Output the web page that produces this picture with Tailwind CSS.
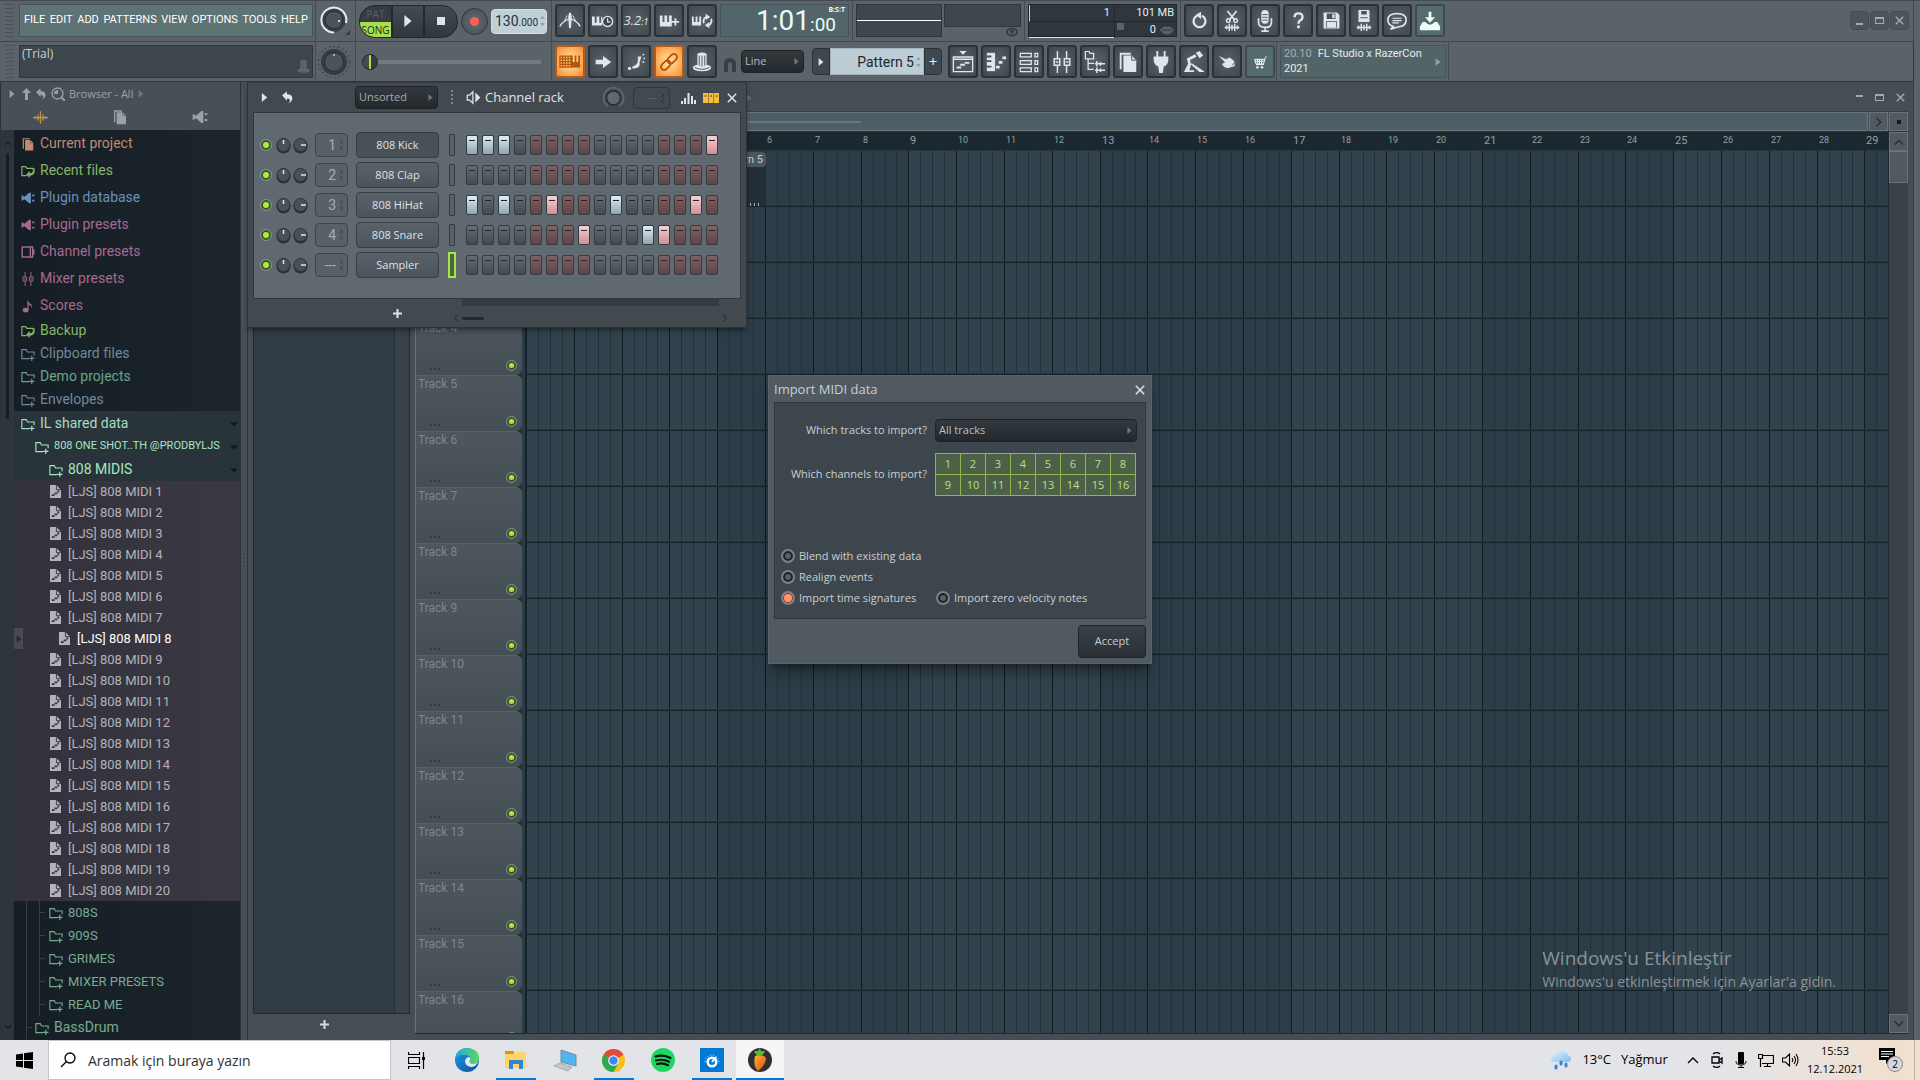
<!DOCTYPE html>
<html lang="tr">
<head>
<meta charset="utf-8">
<title>FL Studio</title>
<script src="https://cdn.jsdelivr.net/npm/@tailwindcss/browser@4"></script>
</head>
<body class="h-screen overflow-hidden bg-[#434b52] font-['Open_Sans','Noto_Sans',sans-serif] text-[11px] text-[#c5cdd1] flex flex-col">

<svg class="absolute size-0" aria-hidden="true">
  <defs>
    <linearGradient id="edgeA" x1="0" y1="0" x2="1" y2="1"><stop offset="0" stop-color="#1b9de2"/><stop offset="1" stop-color="#0c4fa0"/></linearGradient>
    <linearGradient id="edgeB" x1="0" y1="0" x2="1" y2="0"><stop offset="0" stop-color="#1fa8e0"/><stop offset="1" stop-color="#5fd860"/></linearGradient>
    <linearGradient id="fruit" x1="0" y1="0" x2="1" y2="1"><stop offset="0" stop-color="#ffb52e"/><stop offset="1" stop-color="#e04a10"/></linearGradient>
    <linearGradient id="cloud" x1="0" y1="0" x2="1" y2="1"><stop offset="0" stop-color="#e2f2fd"/><stop offset="1" stop-color="#7fbdec"/></linearGradient>
  </defs>
  <symbol id="metronome" viewBox="0 0 24 24"><path d="M1 18Q4 12 11 10M23 18Q20 12 13 10" fill="none" stroke="currentColor" stroke-width="1.600"/><path d="M11 3h2l1 4-1 13h-2L10 7z"/><path d="M9 6l-3 6M15 6l3 6" stroke="currentColor"/></symbol>
  <symbol id="keysclock" viewBox="0 0 24 24"><path d="M0 7h3v7h2V7h3v7h2V7h1v10H0z"/><circle cx="17" cy="12.500" r="5.500" fill="#3d454a" stroke="currentColor" stroke-width="1.500"/><path d="M17 9v4h3" fill="none" stroke="currentColor" stroke-width="1.300"/></symbol>
  <symbol id="keysplus" viewBox="0 0 24 24"><path d="M2 6h3v7h2V6h3v7h2V6h3v12H2zM18 9h2v3h3v2h-3v3h-2v-3h-3v-2h3z"/></symbol>
  <symbol id="keysloop" viewBox="0 0 24 24"><path d="M1 7h2v6h2V7h2v6h2V7h2v10H1z"/><path d="M14 14.500a4 5 0 0 1 3-7M22 9.500a4 5 0 0 1-3 7" fill="none" stroke="currentColor" stroke-width="2"/><path d="M16 4l5 3.500-5 3.500zM20 13l-5 3.500 5 3.500z"/></symbol>
  <symbol id="typing" viewBox="0 0 24 24"><path d="M1 5.500h12v12H1zM1 8.500h12M1 11.500h12M1 14.500h12M4 6v12M7 6v12M10 6v12" fill="none" stroke="currentColor" stroke-width="1.400"/><path d="M13 5h2v7h2V5h2v7h2V5h2v13H13z"/></symbol>
  <symbol id="arrow" viewBox="0 0 24 24"><path d="M4 9.500h8V5.500l9 6.500-9 6.500v-4H4z"/></symbol>
  <symbol id="slide" viewBox="0 0 24 24"><circle cx="5" cy="19" r="1.800"/><path d="M8 19q9 1 8-7l2-6h-4v5q0 4-6 6z"/><circle cx="20" cy="4" r="1"/><circle cx="21" cy="8" r="1"/><circle cx="20" cy="12" r="1"/></symbol>
  <symbol id="link" viewBox="0 0 24 24"><g fill="none" stroke="currentColor" stroke-width="2" transform="rotate(-45 12 12)"><rect x="1" y="8.500" width="12" height="7" rx="3.500"/><rect x="11" y="8.500" width="12" height="7" rx="3.500"/></g></symbol>
  <symbol id="knobtall" viewBox="0 0 24 24"><path d="M7 3q5-3 10 0v12q5 1 5 3 0 4-10 4T2 18q0-2 5-3z"/><path d="M9 5v11M12 5v12M15 5v11M4 18q8 4 16 0" fill="none" stroke="#4a5359" stroke-width="1"/></symbol>
  <symbol id="undoround" viewBox="0 0 24 24"><path d="M9 6a7.500 7.500 0 1 0 6 0" fill="none" stroke="currentColor" stroke-width="2.800"/><path d="M14 1v9L7 5z"/></symbol>
  <symbol id="cut" viewBox="0 0 24 24"><path d="M7 1l8 10M17 1L9 11" stroke="currentColor" stroke-width="1.800"/><circle cx="8" cy="11.500" r="2" fill="none" stroke="currentColor" stroke-width="1.500"/><circle cx="16" cy="11.500" r="2" fill="none" stroke="currentColor" stroke-width="1.500"/><path d="M4 19h16M6 17v4M9 15v8M12 16v6M15 15v8M18 17v4" stroke="currentColor" stroke-width="1.600"/></symbol>
  <symbol id="mic" viewBox="0 0 24 24"><rect x="8" y="0" width="8" height="15" rx="4"/><path d="M5 9v5q0 5 7 5t7-5V9M12 18v5M8 23h8" fill="none" stroke="currentColor" stroke-width="1.800"/><path d="M9 5h6M9 8h6M9 11h6" stroke="#4a5359"/></symbol>
  <symbol id="help" viewBox="0 0 24 24"><path d="M7 8q0-5 5-5t5 4.500q0 3-3 4.500-2 1-2 4" fill="none" stroke="currentColor" stroke-width="3"/><circle cx="12" cy="20" r="2"/></symbol>
  <symbol id="save" viewBox="0 0 24 24"><path d="M2 2h17l3 3v17H2z"/><path d="M6 3h11v7H6zM5 13h14v8H5z" fill="#4a5359"/><path d="M13 4h3v5h-3zM6 14h12v7H6z"/></symbol>
  <symbol id="savewave" viewBox="0 0 24 24"><path d="M6 0h11l1 1v12H6z"/><path d="M9 1h6v4H9zM8 8h8v1H8z" fill="#4a5359"/><path d="M4 19h16M6 17v4M9 15v8M12 16v6M15 15v8M18 17v4" stroke="currentColor" stroke-width="1.600"/></symbol>
  <symbol id="chat" viewBox="0 0 24 24"><path d="M8 18q-6-2-6-7 0-7 10-7t10 7-9 7.500L5 21z" fill="none" stroke="currentColor" stroke-width="1.800"/><path d="M7 9h10M7 11.500h10M7 14h7" stroke="currentColor" stroke-width="1.300"/></symbol>
  <symbol id="download" viewBox="0 0 24 24"><path d="M10.500 2h3v6h4L12 14 6.500 8h4z"/><path d="M4 13h3q5 6 10 0h3l3 5v4H1v-4z"/></symbol>
  <symbol id="playlist" viewBox="0 0 24 24"><path d="M8 0h8l-4 4z"/><path d="M1.500 6.500h21v16h-21zM2 9h20" fill="none" stroke="currentColor" stroke-width="1.500"/><path d="M5 17h5v2H5zM9 14h5v2H9zM14 12h5v2h-5z"/></symbol>
  <symbol id="pianoroll" viewBox="0 0 24 24"><path d="M2 2h9v20H2z"/><path d="M2 5h5v2H2zM2 10h5v2H2zM2 16h5v2H2z" fill="#4a5359"/><path d="M12 16h4v3h-4zM15 11h4v3h-4zM19 6h4v3h-4z"/></symbol>
  <symbol id="rack" viewBox="0 0 24 24"><path d="M2.500 2.500h12v4h-12zM2.500 10.500h12v4h-12zM2.500 18.500h12v4h-12zM18.500 2.500h3v4h-3zM18.500 10.500h3v4h-3zM18.500 18.500h3v4h-3z" fill="none" stroke="currentColor" stroke-width="1.400"/></symbol>
  <symbol id="mixer" viewBox="0 0 24 24"><path d="M7 0v8M7 16v8M17 0v8M17 16v8" stroke="currentColor" stroke-width="1.600"/><path d="M3.500 8.500h6v7h-6zM14.500 8.500h6v7h-6z" fill="none" stroke="currentColor" stroke-width="1.600"/><path d="M5 12h3M16 12h3" stroke="currentColor" stroke-width="1.600"/></symbol>
  <symbol id="browser" viewBox="0 0 24 24"><path d="M1.500 8.500v-8h4l1 2h4v6zM4.500 9v11h6M5 13.500h6" fill="none" stroke="currentColor" stroke-width="1.400"/><path d="M12 14h11M12 21h11M14 11v6M18 12v4M14 18v6M18 19v4" stroke="currentColor" stroke-width="1.600"/></symbol>
  <symbol id="docs" viewBox="0 0 24 24"><path d="M3 2h12v2H5v16H3z"/><path d="M7 5h9l5 5v13H7z"/><path d="M16 5v5h5" fill="none" stroke="#4a5359"/></symbol>
  <symbol id="plug" viewBox="0 0 24 24"><path d="M7 0h2v6h6V0h2v6h3v3q0 6-5 8l-1 7h-4l-1-7q-5-2-5-8V6h3z"/></symbol>
  <symbol id="plugside" viewBox="0 0 24 24"><path d="M1 7l5 3 8-7h3v18h-3l-8-7-5 3zM19 6h4v3h-4zM19 15h4v3h-4z"/></symbol>
  <symbol id="lamp" viewBox="0 0 24 24"><path d="M14 2l4-2 4 5-4 3z"/><path d="M14 5L6 9l1 5" fill="none" stroke="currentColor" stroke-width="3"/><path d="M1 23l5-10 3 1-2 7h5v2zM9 13l14 9v1h-5l-9-8z"/></symbol>
  <symbol id="hand" viewBox="0 0 24 24"><path d="M1 5l9 4 5-2 6 5v6l-6 2q-6 1-8-2l-2-3 4-2z"/><path d="M22 11l-4 6M20 19l-5 1" stroke="#4a5359"/></symbol>
  <symbol id="cart" viewBox="0 0 24 24"><path d="M22 4l-2 1-3 11H6M18 8H4l2 7h12M4 11h14M8 8l1 7M11 8v7M15 8l-1 7" fill="none" stroke="currentColor" stroke-width="1.500"/><circle cx="8" cy="20" r="1.800"/><circle cx="15" cy="20" r="1.800"/></symbol>
  <symbol id="undo" viewBox="0 0 24 24"><path d="M2 8l9-7v5q10 0 10 8 0 6-8 9 5-4 3-7-1-2-5-2v4z"/></symbol>
  <symbol id="tri" viewBox="0 0 10 10"><path d="M2 0l6 5-6 5z"/></symbol>
  <symbol id="tridown" viewBox="0 0 10 10"><path d="M0 3h10L5 8z"/></symbol>
  <symbol id="cross" viewBox="0 0 12 12"><path d="M1 1l10 10M11 1L1 11" stroke="currentColor" stroke-width="1.800"/></symbol>
  <symbol id="chev" viewBox="0 0 12 12"><path d="M3 1l5 5-5 5" fill="none" stroke="currentColor" stroke-width="1.600"/></symbol>
  <symbol id="folder" viewBox="0 0 24 24"><path d="M14 20H1.500V4.500H9l2 4h11.500V14" fill="none" stroke="currentColor" stroke-width="1.900"/><path d="M18.500 15v9M14 19.500h9" stroke="currentColor" stroke-width="2"/></symbol>
  <symbol id="folderback" viewBox="0 0 24 24"><path d="M10 20H1.500V4.500H8l2 3h10V10" fill="none" stroke="currentColor" stroke-width="2"/><path d="M23 7q3 12-8 13v4l-6-6 6-6v4q7 0 6-9z"/></symbol>
  <symbol id="channel" viewBox="0 0 24 24"><path d="M2 3.500h18v17H2zM16 3v18M19 9h3v6h-3" fill="none" stroke="currentColor" stroke-width="2.400"/></symbol>
  <symbol id="note" viewBox="0 0 24 24"><ellipse cx="8" cy="19" rx="5" ry="4"/><path d="M11 19V1q1 5 5 7t2 8q0-5-5-6v9z"/></symbol>
  <symbol id="midi" viewBox="0 0 12 14"><path d="M0 0h7l5 5v9H0z"/><path d="M7 0v5h5" fill="none" stroke="#36343f"/><path d="M2 10h3v2H2zM5 8h3v2H5zM8 6h2v2H8z" fill="#36343f"/></symbol>
  <symbol id="speaker" viewBox="0 0 24 24"><path d="M2 8h4l5-5v18l-5-5H2z" fill="none" stroke="currentColor" stroke-width="2"/><path d="M15 4l8 8-8 8z"/></symbol>
  <symbol id="wave" viewBox="0 0 24 24"><path d="M0 12h24M4 10v4M8 7v10M12 2v20M16 7v10M20 10v4" stroke="currentColor" stroke-width="2"/></symbol>
</svg>

<header class="bg-[#5b6369] border-t border-[#444c53] pr-[6px]">
  <div class="flex items-stretch h-[41px] border-b border-[#40484f] border-r">
    <div class="flex w-[316px] pl-[5px] pt-[3px] gap-[5px] border-r border-[#444c53]">
      <div class="w-[9px] h-[33px] bg-[repeating-linear-gradient(to_bottom,#4a5258_0_1px,transparent_1px_4px)]"></div>
      <nav id="menu" class="flex items-center justify-between w-[294px] h-[33px] px-1 bg-[#5e7373] border border-[#465459] text-white text-[11px] font-['Roboto','Open_Sans',sans-serif]"></nav>
    </div>
    <div class="w-10 pt-[3px] pr-[3px] border-r border-[#444c53] flex justify-center">
      <svg class="size-8" viewBox="0 0 32 32"><circle cx="16" cy="16" r="12" fill="#3b444a"/><circle cx="16" cy="16" r="9" fill="#4a5359" stroke="#20272c"/><path d="M16 28.500A12.500 12.500 0 1 1 28 19" fill="none" stroke="#e4ebee" stroke-width="2"/><circle cx="21" cy="17" r="1" fill="#fff"/><path d="M27 31h5v-5z" fill="#353d43"/></svg>
    </div>
    <div class="flex items-center w-[196px] pl-[3px] border-r border-[#444c53]">
      <button class="w-[33px] h-[33px] rounded-l-2xl overflow-hidden bg-[#353d43] border border-[#22292e] flex flex-col text-center text-[10px] leading-4"><span class="h-4 w-full text-[#565f65]">PAT</span><span class="h-4 w-full bg-[#a5e04c] text-[#1e2a10]">SONG</span></button>
      <button aria-label="Play" class="w-[32px] h-[33px] bg-linear-to-b from-[#434b51] to-[#30373c] border border-[#22292e] flex items-center justify-center text-[#e2e7ea]"><svg class="size-3 fill-current"><use href="#tri"/></svg></button>
      <button aria-label="Stop" class="w-[34px] h-[33px] rounded-r-2xl bg-linear-to-b from-[#434b51] to-[#30373c] border border-[#22292e] flex items-center justify-center"><span class="size-2 bg-[#dfe4e7]"></span></button>
      <button aria-label="Record" class="ml-[3px] size-[27px] rounded-full bg-radial from-[#626b70] to-[#454e54] border border-[#2e363b] flex items-center justify-center"><span class="size-[9px] rounded-full bg-[#ff5c58]"></span></button>
      <div class="ml-[3px] w-[56px] h-[25px] rounded bg-[#bfd0d8] border border-[#d5e0e5] text-[#263037] flex items-center pl-[3px] font-['Roboto',sans-serif] leading-none"><span class="text-[14px]">130</span><span class="text-[10px] pt-[3px]">.000</span><svg class="ml-auto mr-px w-[5px] h-3" viewBox="0 0 5 12"><path d="M0 4l2.500-3L5 4zM0 8l2.500 3L5 8z" fill="#93a3ab"/></svg></div>
    </div>
    <div class="flex w-[301px] pt-[3px] pl-[3px] gap-[3px] border-r border-[#444c53]">
      <div class="contents" data-tools="metronome keysclock 321 keysplus keysloop"></div>
      <div class="flex-1 mr-[3px] h-[33px] bg-[#52656a] border border-[#445459] text-[#e8fbfb] font-['Roboto',sans-serif] flex items-end justify-end leading-none relative"><span class="text-[28px] pb-px">1:01</span><span class="text-[19px] pr-[12px] pb-[2px]">:00</span><span class="absolute right-[3px] top-[1px] text-[7px] font-bold font-['Open_Sans',sans-serif]">B:S:T</span></div>
    </div>
    <div class="flex w-[172px] pt-[3px] pl-[3px] gap-[2px] border-r border-[#444c53]">
      <div class="w-[86px] h-[33px] bg-[#3e474e] border border-[#30383e] flex items-center"><div class="h-px w-full bg-white"></div></div>
      <div class="w-[77px]"><div class="h-[23px] bg-[#3e474e] border border-[#30383e]"></div><svg class="ml-auto mr-[3px] w-3 h-[10px]" viewBox="0 0 12 10"><ellipse cx="6" cy="5" rx="5" ry="3.500" fill="none" stroke="#363e44" stroke-width="2"/><circle cx="6" cy="4.500" r="2" fill="#363e44"/></svg></div>
    </div>
    <div class="w-[156px] pt-[3px] pl-[3px] border-r border-[#444c53]">
      <div class="grid grid-cols-[85px_1fr] w-[149px] h-[33px] bg-[#2f373d] border border-[#20272c] text-right text-[#e6ecef] text-[11px] leading-4 font-['Roboto',sans-serif]">
        <span class="border-l border-l-[#c5cdd1] pr-1 border-b border-b-[#20272c]">1</span><span class="pr-[2px] border-l border-b border-[#20272c]">101 MB</span>
        <span class="border-b border-[#dfe6ea] h-4"></span><span class="flex items-center justify-end gap-1 pr-[2px] border-l border-[#20272c]"><span class="mr-auto w-[7px] h-[7px] -mt-2 ml-[2px] bg-[#5b6369]"></span>0 <svg class="w-[14px] h-[9px]" viewBox="0 0 14 9"><path d="M0 4q4-5 7-3 3-2 7 3-7 9-14 0z" fill="#5b6369"/><path d="M2 4h10" stroke="#2f373d"/></svg></span>
      </div>
    </div>
    <div class="flex flex-1 pl-[3px] pt-[3px] gap-[3px]" data-tools="undoround cut mic help save savewave chat download*"></div>
    <div class="flex gap-px pr-[4px] pt-[10px] text-[#a3abb0]">
      <button aria-label="Minimize" class="size-[19px] rounded-sm bg-[#4c555b] border border-[#454d53] flex items-end justify-center pb-[4px]"><span class="w-[7px] h-[2px] bg-current"></span></button>
      <button aria-label="Restore" class="size-[19px] rounded-sm bg-[#4c555b] border border-[#454d53] flex items-center justify-center"><span class="w-[9px] h-[7px] border border-t-2"></span></button>
      <button aria-label="Close" class="size-[19px] rounded-sm bg-[#4c555b] border border-[#454d53] flex items-center justify-center"><svg class="size-[9px]"><use href="#cross"/></svg></button>
    </div>
  </div>
  <div class="flex h-10 border-b border-r border-[#30383e]">
    <div class="flex w-[316px] pl-[5px] pt-[3px] gap-[5px] border-r border-[#444c53]">
      <div class="w-[9px] h-[33px] bg-[repeating-linear-gradient(to_bottom,#4a5258_0_1px,transparent_1px_4px)]"></div>
      <div class="flex justify-between w-[294px] h-[33px] pl-[2px] pr-px bg-[#3e464d] border border-[#30383e] text-[12px] leading-4 text-[#c9d0d4]">(Trial)<svg class="size-[15px] mt-[13px] text-[#636c72] fill-current"><use href="#knobtall"/></svg></div>
    </div>
    <div class="w-10 pt-[3px] pr-[3px] border-r border-[#444c53] flex justify-center">
      <svg class="size-[34px] shrink-0" viewBox="0 0 34 34"><circle cx="17" cy="17" r="15.500" fill="none" stroke="#3c454b" stroke-width="1.500" stroke-dasharray="1.500 3"/><circle cx="17" cy="17" r="13" fill="#343d43"/><circle cx="17" cy="17" r="9.500" fill="#4a5359" stroke="#252c31"/><circle cx="17" cy="10" r="1" fill="#c5cdd1"/></svg>
    </div>
    <div class="w-[196px] pl-[6px] pr-[10px] flex items-center border-r border-[#444c53]">
      <input type="range" aria-label="Master volume" value="0" class="w-full h-[17px] appearance-none bg-transparent bg-[linear-gradient(#717a80,#717a80)] bg-[length:100%_4px] bg-center bg-no-repeat [&::-webkit-slider-thumb]:appearance-none [&::-webkit-slider-thumb]:size-[16px] [&::-webkit-slider-thumb]:rounded-full [&::-webkit-slider-thumb]:border [&::-webkit-slider-thumb]:border-[#20272c] [&::-webkit-slider-thumb]:bg-[linear-gradient(90deg,#434c52_6px,#a5e83c_6px,#a5e83c_8px,#343c42_8px)]">
    </div>
    <div class="flex w-[725px] pt-[3px] pl-[3px] gap-[3px] border-r border-[#444c53]">
      <div class="contents" data-tools="typing! arrow slide link! knobtall"></div>
      <svg class="w-[14px] h-[15px] mt-3 ml-[3px] mr-[1px]" viewBox="0 0 14 15"><path d="M3 15V8q0-5 4-5t4 5v7" fill="none" stroke="#363e44" stroke-width="4"/></svg>
      <div class="relative h-[23px] mt-[5px] w-[63px]"><select aria-label="Snap" class="appearance-none size-full bg-linear-to-b from-[#33393d] to-[#22282c] border border-[#1c2226] rounded-sm pl-[3px] text-[#b5bcc0]"><option>Line</option></select><svg class="absolute right-1 top-2 size-[7px] fill-[#6c757a]"><use href="#tri"/></svg></div>
      <div class="flex mt-[3px] ml-[5px] mr-[3px] h-[27px]">
        <button aria-label="Pattern menu" class="w-[18px] bg-[#3f484e] border border-[#2b3237] rounded-l flex items-center justify-center"><svg class="size-2 fill-[#dfe5e8]"><use href="#tri"/></svg></button>
        <div class="w-[94px] bg-[#bccdd5] border border-[#a5b5bd] text-[#20292f] text-[14px] leading-6 font-['Roboto',sans-serif] flex items-center justify-end gap-[2px] pr-[2px]">Pattern 5<svg class="w-[5px] h-3" viewBox="0 0 5 12"><path d="M0 4l2.500-3L5 4zM0 8l2.500 3L5 8z" fill="#93a3ab"/></svg></div>
        <button aria-label="Add pattern" class="w-[18px] bg-[#3f484e] border border-[#2b3237] rounded-r text-[#e5eaec] text-[15px] leading-none">+</button>
      </div>
      <div class="contents" data-tools="playlist pianoroll rack mixer browser docs plug lamp hand cart*"></div>
    </div>
    <a href="#" class="block w-[166px] ml-[3px] mt-[3px] h-[33px] bg-[#536468] border border-[#445459] leading-[15px] pl-[3px] relative text-[#e3edee] font-['Roboto',sans-serif]"><span class="text-[#9fb2b5] mr-[6px]">20.10</span>FL Studio x RazerCon<br>2021<svg class="absolute right-[3px] top-3 size-2 fill-[#8fa0a3]"><use href="#tri"/></svg></a>
    <div class="ml-[2px] border-l border-[#444c53]"></div>
  </div>
</header>

<main class="flex flex-1 min-h-0 relative pr-[6px] bg-[#59626a]">
  <aside class="w-[241px] shrink-0 border-l border-r border-[#2c343a] bg-[#475057] flex flex-col">
    <div class="h-[48px] text-[#9aa2a7]">
      <div class="flex items-center h-6 pl-[7px] gap-1">
        <svg class="size-2 fill-current mr-[2px]"><use href="#tri"/></svg>
        <svg class="w-[9px] h-3" viewBox="0 0 9 12"><path d="M4.500 0L9 5H6v7H3V5H0z" class="fill-current"/></svg>
        <svg class="size-3 fill-current"><use href="#undo"/></svg>
        <svg class="size-[14px]" viewBox="0 0 14 14"><circle cx="6.500" cy="6.500" r="5.500" fill="none" stroke="currentColor" stroke-width="1.300"/><path d="M10 10l4 4" stroke="currentColor" stroke-width="2"/><path d="M3 7a4 4 0 0 1 4-4v4z" class="fill-current"/></svg>
        <span class="text-[11px]">Browser - All</span>
        <svg class="size-2 fill-[#6e777c]"><use href="#tri"/></svg>
      </div>
      <div class="flex justify-around items-center h-[22px]">
        <svg class="size-[15px] text-[#c79640]"><use href="#wave"/></svg>
        <svg class="size-4 fill-current"><use href="#docs"/></svg>
        <svg class="size-4 fill-current"><use href="#plugside"/></svg>
      </div>
    </div>
    <div class="flex flex-1 min-h-0">
      <div class="w-[13px] bg-[#2d363c] text-[#151c21] flex flex-col items-center py-[9px]">
        <svg class="size-2 -rotate-90"><use href="#chev"/></svg>
        <div class="w-[3px] h-[266px] mt-[6px] rounded bg-[#171e23]"></div>
        <svg class="size-2 rotate-90 mt-auto"><use href="#chev"/></svg>
      </div>
      <div id="tree" class="flex-1 min-w-0 overflow-hidden bg-linear-to-r from-[#151e24] to-[#1c252c] font-['Roboto','Open_Sans',sans-serif] text-[14px] whitespace-nowrap"></div>
    </div>
  </aside>
  <div class="w-[7px] shrink-0 bg-[#475057] border-r border-[#2c343a] flex items-center justify-center"><div class="w-px h-4 bg-[repeating-linear-gradient(to_bottom,#20272c_0_1px,transparent_1px_4px)]"></div></div>

  <section class="flex-1 min-w-0 flex flex-col bg-[#454e54] pr-[5px] border-r border-[#363e44]" aria-label="Playlist">
    <div class="h-[29px] flex items-center justify-end gap-3 pr-[3px] pt-[2px] text-[#a3abb0]">
      <svg class="size-2 fill-[#626b70] ml-[497px] mr-auto"><use href="#tri"/></svg>
      <span class="w-[7px] h-[2px] bg-current mb-1"></span><span class="w-[9px] h-[7px] border border-t-2"></span><svg class="size-[9px]"><use href="#cross"/></svg>
    </div>
    <div class="flex flex-1 min-h-0">
      <div class="w-[157px] ml-[5px] mr-[5px] flex flex-col shrink-0">
        <div class="flex flex-1 border border-[#20292f] bg-[#323c44]"><div class="flex-1 border-r border-[#272f36]"></div><div class="w-[14px] bg-[#3a4249]"></div></div>
        <button aria-label="Add" class="h-5 mb-[6px] pr-[14px] text-[#d5dbde] flex items-center justify-center"><svg class="size-[9px]" viewBox="0 0 9 9"><path d="M4.500 0v9M0 4.500h9" stroke="currentColor" stroke-width="2"/></svg></button>
      </div>
      <div class="flex-1 min-w-0 flex flex-col mb-[6px]">
        <div class="flex h-5 border-t border-[#363e44]">
          <div class="flex-1 h-[19px] bg-[#4f5e64] border border-[#67747a] flex items-center"><div class="w-[445px] h-[2px] bg-[#65757b]"></div></div>
          <div class="size-[19px] ml-px bg-[#515a61] border border-[#6a7379] text-[#252c31] flex items-center justify-center"><svg class="size-[10px]"><use href="#chev"/></svg></div>
          <div class="size-[19px] ml-px bg-[#515a61] border border-[#6a7379] flex items-center justify-center"><span class="size-1 bg-[#151b1f]"></span></div>
        </div>
        <div class="flex h-5 bg-[#1c282f] border-y border-[#2b363c]">
          <div class="w-[112px] shrink-0"></div>
          <div id="ruler" class="flex flex-1 min-w-0 overflow-hidden items-center text-[#93a0a5] font-['Roboto',sans-serif]"></div>
          <div class="size-[19px] bg-[#515a61] border border-[#6a7379] text-[#252c31] flex items-center justify-center shrink-0"><svg class="size-[10px] -rotate-90"><use href="#chev"/></svg></div>
        </div>
        <div class="flex flex-1 min-h-0 border-b border-[#20292f]">
          <div id="tracks" class="w-[107px] shrink-0 overflow-hidden bg-[#1f2c34] border-l border-[#697277]"></div>
          <div class="w-[5px] shrink-0 bg-[#2c3b45] border-r-2 border-[#14222a]"></div>
          <div id="canvas" class="flex-1 min-w-0 relative overflow-hidden">
            <svg id="grid" class="absolute inset-0 size-full" shape-rendering="crispEdges"></svg>
            <div class="absolute left-[130px] top-px w-[109px] h-[54px] bg-[#1f2c34]/80 flex flex-col justify-between"><span class="bg-[#4c565c] rounded-r-sm h-[15px] text-right pr-[3px] leading-[15px] text-[11px] font-['Roboto',sans-serif]">Pattern 5</span><span class="self-end mr-1 w-3 h-[3px] bg-[repeating-linear-gradient(to_right,#aab3b8_0_1px,transparent_1px_4px)]"></span></div>
            <div class="absolute right-[52px] bottom-[42px] text-[#8b9295]"><p class="text-[19px] leading-7">Windows'u Etkinleştir</p><p class="text-[14px] leading-[19px]">Windows'u etkinleştirmek için Ayarlar'a gidin.</p></div>
          </div>
          <div class="w-5 shrink-0 bg-[#3a4249] border-l border-[#20292f] flex flex-col justify-between text-[#252c31]">
            <div class="h-8 bg-[#515a61] border border-[#6a7379]"></div>
            <div class="h-[19px] bg-[#515a61] border border-[#6a7379] flex items-center justify-center"><svg class="size-[10px] rotate-90"><use href="#chev"/></svg></div>
          </div>
        </div>
      </div>
    </div>
  </section>

  <section aria-label="Channel rack" class="absolute left-[247px] top-0 w-[500px] h-[246px] bg-[#42494f] border border-[#2c343a] border-t-[#353d43] flex flex-col shadow-md shadow-black/30">
    <div class="flex items-center h-[29px] pl-3 pr-[9px] text-[#e0e5e8]">
      <svg class="size-[9px] fill-current"><use href="#tri"/></svg>
      <svg class="size-[13px] fill-current ml-[12px]"><use href="#undo"/></svg>
      <div class="relative ml-[61px] w-[83px] h-[23px]"><select aria-label="Filter" class="appearance-none size-full bg-linear-to-b from-[#33393d] to-[#22282c] border border-[#1c2226] rounded-sm pl-[3px] text-[#a5adb1] text-[11px]"><option>Unsorted</option></select><svg class="absolute right-1 top-2 size-[7px] fill-[#6c757a]"><use href="#tri"/></svg></div>
      <div class="ml-[13px] w-[2px] h-[15px] bg-[repeating-linear-gradient(to_bottom,#7b8489_0_2px,transparent_2px_4px)]"></div>
      <svg class="size-[15px] fill-current ml-[13px]"><use href="#speaker"/></svg>
      <h2 class="text-[13px] ml-1 w-[117px]">Channel rack</h2>
      <svg class="size-[23px]" viewBox="0 0 23 23"><path d="M6 20a10 10 0 1 1 11 0" fill="none" stroke="#5b646a" stroke-width="2"/><circle cx="11.500" cy="12" r="7" fill="#5f686e" stroke="#262d32" stroke-width="1.500"/></svg>
      <div class="w-[37px] h-[22px] ml-2 rounded border border-[#2f373d] flex items-center justify-end gap-1 pr-1 text-[#2b3237]"><span class="text-[9px] text-[#697277]">---</span><svg class="w-[5px] h-3" viewBox="0 0 5 12"><path d="M1 1l3 2-3 2M4 7L1 9l3 2" fill="none" stroke="currentColor"/></svg></div>
      <svg class="w-[15px] h-3 ml-[11px]" viewBox="0 0 15 12"><path d="M1 9v3M4 6v6M7.500 1v11M11 4v8M14 8v4" stroke="currentColor" stroke-width="2"/></svg>
      <svg class="w-4 h-[10px] ml-[7px]" viewBox="0 0 16 10"><path d="M0 0h5v10H0zM5.500 0h5v10h-5zM11 0h5v10h-5z" fill="#f6bd3c"/><path d="M1.500 3h2M7 3h2M12.500 3h2" stroke="#423a20"/></svg>
      <svg class="size-[10px] ml-auto"><use href="#cross"/></svg>
    </div>
    <div id="channels" class="mx-[5px] h-[187px] bg-[#616970] border border-[#30383e] pt-[17px]"></div>
    <div class="flex flex-1 text-[#2b3237]">
      <button aria-label="Add channel" class="ml-[145px] mt-[9px] size-[11px] text-[#dfe4e7]"><svg class="size-[9px]" viewBox="0 0 9 9"><path d="M4.500 0v9M0 4.500h9" stroke="currentColor" stroke-width="2"/></svg></button>
      <div class="ml-[48px] flex-1 pr-[17px]"><div class="h-[7px] ml-[10px] mr-[10px] bg-[#343b41]"></div><div class="flex items-center pt-2"><svg class="size-2 rotate-180"><use href="#chev"/></svg><span class="ml-[2px] h-[3px] w-[22px] rounded bg-[#242b30]"></span><svg class="size-2 ml-auto"><use href="#chev"/></svg></div></div>
    </div>
  </section>

  <section role="dialog" aria-labelledby="dlg-title" class="absolute left-[768px] top-[293px] w-[384px] h-[289px] bg-[#515a61] border border-[#5a636a] px-[5px] text-[#c8cfd2] shadow-lg shadow-black/40">
    <div class="flex items-center justify-between h-[26px] pt-px pr-px"><h2 id="dlg-title" class="text-[13px]">Import MIDI data</h2><button aria-label="Close" class="text-[#dfe4e7]"><svg class="size-[10px]"><use href="#cross"/></svg></button></div>
    <div class="h-[217px] bg-[#3e464d] border border-[#30383e] pt-4 px-2">
      <div class="grid grid-cols-[144px_202px] gap-x-2 gap-y-[11px] items-center text-right">
        <label for="trk">Which tracks to import?</label>
        <div class="relative h-[23px]"><select id="trk" class="appearance-none size-full bg-linear-to-b from-[#33393d] to-[#22282c] border border-[#1c2226] rounded-sm pl-[3px] text-[#b9c0c4]"><option>All tracks</option></select><svg class="absolute right-1 top-2 size-[7px] fill-[#6c757a]"><use href="#tri"/></svg></div>
        <span>Which channels to import?</span>
        <div id="midich" class="grid grid-cols-8 gap-px p-px w-[201px] h-[43px] bg-[#8db84e] text-[#b4e283] text-center"></div>
      </div>
      <div class="grid grid-cols-[155px_1fr] gap-y-[5px] pt-[52px] leading-4 -ml-[2px]">
        <label class="flex items-center gap-1 col-span-2"><input type="checkbox" class="appearance-none size-[14px] rounded-full border-2 border-[#788187] bg-[#566066] shadow-[inset_0_0_0_2px_#1b2125] checked:bg-[#ff9a70] checked:shadow-[inset_0_0_0_1px_#a3200c]">Blend with existing data</label>
        <label class="flex items-center gap-1 col-span-2"><input type="checkbox" class="appearance-none size-[14px] rounded-full border-2 border-[#788187] bg-[#566066] shadow-[inset_0_0_0_2px_#1b2125] checked:bg-[#ff9a70] checked:shadow-[inset_0_0_0_1px_#a3200c]">Realign events</label>
        <label class="flex items-center gap-1"><input type="checkbox" checked class="appearance-none size-[14px] rounded-full border-2 border-[#788187] bg-[#566066] shadow-[inset_0_0_0_2px_#1b2125] checked:bg-[#ff9a70] checked:shadow-[inset_0_0_0_1px_#a3200c]">Import time signatures</label>
        <label class="flex items-center gap-1"><input type="checkbox" class="appearance-none size-[14px] rounded-full border-2 border-[#788187] bg-[#566066] shadow-[inset_0_0_0_2px_#1b2125] checked:bg-[#ff9a70] checked:shadow-[inset_0_0_0_1px_#a3200c]">Import zero velocity notes</label>
      </div>
    </div>
    <button class="block ml-auto mt-[6px] w-[68px] h-[33px] rounded-sm bg-linear-to-b from-[#3a4146] to-[#2a3034] border border-[#1e2428]">Accept</button>
  </section>
</main>

<footer class="h-10 shrink-0 bg-linear-to-r from-[#e3e4e7] from-90% to-[#f3dfcb] flex items-stretch text-black">
  <button aria-label="Start" class="w-12 flex items-center justify-center"><svg class="size-[17px]" viewBox="0 0 17 17"><path d="M0 2.500l7-1V8H0zM8 1.300L17 0v8H8zM0 9h7v6.500l-7-1zM8 9h9v8l-9-1.300z"/></svg></button>
  <label class="w-[343px] bg-white border border-[#c6c6c8] flex items-center pl-[11px] gap-3"><svg class="size-4" viewBox="0 0 16 16"><circle cx="10" cy="6" r="5" fill="none" stroke="#000" stroke-width="1.300"/><path d="M6.500 9.500L1 15" stroke="#000" stroke-width="1.300"/></svg><input type="text" aria-label="Search" placeholder="Aramak için buraya yazın" class="flex-1 text-[14px] outline-none placeholder:text-[#303030]"></label>
  <button aria-label="Task view" class="w-[51px] flex items-center justify-center"><svg class="size-[17px]" viewBox="0 0 17 17"><path d="M.5 0v2.500h11V0M.5 17v-2.500h11V17M.5 5.500h11v6H.5zM15.500 0v17" fill="none" stroke="#000" stroke-width="1.200"/><path d="M14 5h3v3h-3z"/></svg></button>
  <div class="flex" aria-label="Applications">
    <button aria-label="Edge" class="w-[49px] flex items-center justify-center"><svg class="size-6" viewBox="0 0 24 24"><circle cx="12" cy="12" r="12" fill="url(#edgeA)"/><path d="M0 11Q2 0 12 0q12 1 12 10 0 6-6 6-5-1-3-4 1-4-4-5Q4 6 0 11z" fill="url(#edgeB)"/><path d="M15 12q-2 3 3 4 3 0 5-2-2 5-7 5-6-1-6-6 1-4 4-4 2 1 1 3z" fill="#e3e9ee"/></svg></button>
    <button aria-label="Explorer" class="w-[49px] flex items-center justify-center relative"><svg class="w-[22px] h-5" viewBox="0 0 22 20"><path d="M0 1h9v3H0z" fill="#d9980e"/><path d="M0 4h9l2-2h10v16H0z" fill="#ffd568"/><path d="M4 10h14v9h-4v-5H8v5H4z" fill="#2f86d6"/></svg><span class="absolute bottom-0 w-10 h-[2px] bg-[#0078d7]"></span></button>
    <button aria-label="PC" class="w-[49px] flex items-center justify-center"><svg class="size-6" viewBox="0 0 24 24"><path d="M8 2l15 5v11L8 14z" fill="#4fb4f0" stroke="#7a8a95"/><path d="M1 18l6-3 12 4-4 4z" fill="#c3c8cc" stroke="#8e979d" stroke-dasharray="2 1"/></svg></button>
    <button aria-label="Chrome" class="w-[49px] flex items-center justify-center relative"><svg class="size-[23px]" viewBox="0 0 24 24"><circle cx="12" cy="12" r="12" fill="#fbc116"/><path d="M12 12L1.600 6A12 12 0 0 1 22.400 6z" fill="#df4b3c"/><path d="M1.600 6A12 12 0 0 0 12 24l5-9-5-3z" fill="#2da94f"/><circle cx="12" cy="12" r="5.500" fill="#fff"/><circle cx="12" cy="12" r="4.400" fill="#4285f4"/></svg><span class="absolute bottom-0 w-10 h-[2px] bg-[#0078d7]"></span></button>
    <button aria-label="Spotify" class="w-[49px] flex items-center justify-center"><svg class="size-6" viewBox="0 0 24 24"><circle cx="12" cy="12" r="12" fill="#1ed760"/><path d="M4.500 8.500q8-2.500 15 1.500M5 12.500q7-2 13 1.300M6 16q6-1.500 11 1.200" fill="none" stroke="#06140a" stroke-width="2.200" stroke-linecap="round"/></svg></button>
    <button aria-label="Monitor" class="w-[49px] flex items-center justify-center relative"><svg class="size-6" viewBox="0 0 24 24"><path d="M0 0h24v24H0z" fill="#0078d7"/><circle cx="12" cy="14" r="4.300" fill="none" stroke="#fff" stroke-width="2.500"/><path d="M12 14l4-5" stroke="#fff" stroke-width="2"/><path d="M5 14a7 7 0 0 1 14 0" fill="none" stroke="#fff" stroke-dasharray="1 2"/></svg><span class="absolute bottom-0 w-10 h-[2px] bg-[#0078d7]"></span></button>
    <button aria-label="FL Studio" class="w-12 bg-[#f5f5f6] flex items-center justify-center relative"><svg class="size-6" viewBox="0 0 24 24"><circle cx="12" cy="12" r="12" fill="#2d2f33"/><path d="M7 8q6-3 11 2 0 7-8 13-5-4-3-15z" fill="url(#fruit)"/><path d="M12 8Q7 7 6 3l4 0 2-3 1 3 4 0q-1 4-5 5z" fill="#5db832"/></svg><span class="absolute bottom-0 inset-x-0 h-[2px] bg-[#0078d7]"></span></button>
  </div>
  <div class="ml-auto flex items-center text-[13px]">
    <svg class="w-[22px] h-5 mr-[10px]" viewBox="0 0 22 20"><path d="M4 12q-5-1-3-5 1-3 4-2 2-5 8-4 5 1 5 4 4 2 3 5-1 2-4 2z" fill="url(#cloud)"/><path d="M6 16v2M11 12v2M16 14v2" stroke="#2e86e0" stroke-width="3" stroke-linecap="round"/></svg>
    <span class="mr-[10px]">13°C</span><span class="w-[66px]">Yağmur</span>
    <svg class="w-3 h-2" viewBox="0 0 12 8"><path d="M1 7l5-5 5 5" fill="none" stroke="#000" stroke-width="1.300"/></svg>
    <svg class="w-3 h-4 ml-3" viewBox="0 0 12 16"><path d="M1 5h7v6H1zM8 8l3-2v5L8 9M2 2q4-3 7 0M2 14q4 3 7 0" fill="none" stroke="#000" stroke-width="1.300"/></svg>
    <svg class="w-3 h-4 ml-3" viewBox="0 0 12 16"><rect x="3" y="0" width="6" height="12" rx="1"/><path d="M1 9q0 4 5 4t5-4M6 13v3M3 15.500h6" fill="none" stroke="#000"/></svg>
    <svg class="w-4 h-[15px] ml-[11px]" viewBox="0 0 16 15"><path d="M4 2.500h11.500v8H4M9.500 11v3M6 13.500h7M.5 1.500h4v4h-4zM2.500 6v8" fill="none" stroke="#000" stroke-width="1.200"/></svg>
    <svg class="w-[17px] h-[14px] ml-2" viewBox="0 0 17 14"><path d="M.5 5h3l4-4v12l-4-4h-3zM10 5q1.500 2 0 4M12 3q3 4 0 8M14 1q4 6 0 12" fill="none" stroke="#000" stroke-width="1.100"/></svg>
    <div class="w-[72px] text-center text-[11px] leading-[18px]">15:53<br>12.12.2021</div>
    <div class="relative ml-2 mr-[11px] w-6 h-6"><svg class="w-4 h-4" viewBox="0 0 16 16"><path d="M0 0h16v12h-5l-4 4v-4H0z"/><path d="M2 3.500h12M2 6h12M2 8.500h8" stroke="#fff"/></svg><span class="absolute right-0 bottom-0 size-4 rounded-full bg-[#d8d8da] border border-[#8a8a8c] text-[10px] leading-[14px] text-center">2</span></div>
    <span class="h-10 w-[6px] border-l border-[#b9b2aa]"></span>
  </div>
</footer>

<script>
const $ = s => document.querySelector(s);
const icon = (id, cls) => `<svg class="${cls}"><use href="#${id}"/></svg>`;

$('#menu').innerHTML = 'FILE EDIT ADD PATTERNS VIEW OPTIONS TOOLS HELP'.split(' ').map(m => `<button>${m}</button>`).join('');

// Tool buttons: "!" marks a lit button, "*" a teal one
document.querySelectorAll('[data-tools]').forEach(box => {
  box.innerHTML = box.dataset.tools.split(' ').map(t => {
    const id = t.replace(/[!*]/, '');
    const look = t.endsWith('!') ? 'bg-radial from-[#ffe9a0] to-[#f98a2c] border-[#b85a14] text-[#b5540a]'
      : t.endsWith('*') ? 'bg-[#566b6b] border-[#3c4b4d] text-[#eefafa]'
      : 'bg-radial from-[#586167] to-[#3f484e] border-[#2b3237] text-[#e0e6e9]';
    const face = id === '321' ? '<span class="italic text-[13px]">3.2<span class="text-[9px]">:1</span></span>' : icon(id, id === 'cart' ? 'size-4 fill-current' : id === 'help' || id === 'undoround' || id === 'hand' || id === 'save' ? 'size-[19px] fill-current' : 'size-[22px] fill-current');
    return `<button aria-label="${id}" class="w-[30px] h-[33px] shrink-0 rounded-[3px] border-2 flex items-center justify-center ${look}">${face}</button>`;
  }).join('');
});

// Browser tree
const top7 = [['Current project','docs','text-[#c08a70]'],['Recent files','folderback','text-[#86b568]'],['Plugin database','plugside','text-[#6a90bd]'],['Plugin presets','plugside','text-[#a56a90]'],['Channel presets','channel','text-[#a56a90]'],['Mixer presets','mixer','text-[#a56a90]'],['Scores','note','text-[#a56a90]']];
const mid = [['Backup','folderback','text-[#86b568]'],['Clipboard files','folder','text-[#71899a]'],['Demo projects','folder','text-[#6ba588]'],['Envelopes','folder','text-[#71899a]']];
const row = (h, pad, color, id, label, extra = '', size = '') => `<div class="flex items-center ${h} ${pad} ${color} ${size}">${icon(id, 'size-[14px] fill-current mr-[5px] shrink-0')}<span class="flex-1">${label}</span>${extra}</div>`;
const caret = icon('tridown', 'size-2 fill-[#11181d] mr-[2px] shrink-0');
let tree = top7.map(r => row('h-[27px]', 'pl-[7px]', r[2], r[1], r[0])).join('') + mid.map(r => row('h-[23px]', 'pl-[7px]', r[2], r[1], r[0])).join('');
tree += '<div class="bg-[#29343a] pt-px">' + row('h-[23px]', 'pl-[7px]', 'text-[#a8dcc0]', 'folder', 'IL shared data', caret)
  + row('h-[23px]', 'pl-[21px]', 'text-[#a8e6c0]', 'folder', '808 ONE SHOT..TH @PRODBYLJS', caret, 'text-[11px]')
  + row('h-[23px]', 'pl-[35px]', 'text-[#a8e6c0]', 'folder', '808 MIDIS', caret) + '</div>';
tree += '<div class="bg-linear-to-r from-[#33323c] to-[#3a3842]">';
for (let i = 1; i <= 20; i++) {
  const sel = i === 8;
  tree += `<div class="flex items-center h-[21px] text-[13px] ${sel ? 'text-white' : 'text-[#b3b3b8]'}">${sel ? '<span class="w-[9px] h-[21px] bg-[#4a4953] flex items-center justify-center">' + icon('tri', 'size-2 fill-[#2a2932]') + '</span>' : ''}${icon('midi', 'w-[11px] h-[13px] fill-[#b3b3b8] ml-9 mr-[7px] shrink-0')}[LJS] 808 MIDI ${i}</div>`;
}
tree += '</div><div class="ml-[12px] border-l border-[#333e45]"><div class="ml-[12px] border-l border-[#333e45]">'
  + ['808S','909S','GRIMES','MIXER PRESETS','READ ME'].map(n => `<div class="flex items-center h-[23px] text-[13px] text-[#78ac92]"><span class="w-[5px] h-px bg-[#333e45] mr-1"></span>${icon('folder', 'size-[14px] mr-[5px]')}${n}</div>`).join('')
  + `</div><div class="flex items-center h-[23px] text-[#78ac92]"><span class="w-[5px] h-px bg-[#333e45] mr-[3px]"></span>${icon('folder', 'size-[14px] mr-[5px]')}BassDrum</div></div>`;
$('#tree').innerHTML = tree;

// Channel rack rows
const knob = a => `<svg class="w-[15px] h-[17px] mr-[2px] shrink-0" viewBox="0 0 15 17"><circle cx="7.500" cy="9.500" r="7" fill="#2a3136"/><circle cx="7.500" cy="8" r="6.500" fill="#49525a" stroke="#2b3338"/><path d="${a}" stroke="#dfe5e8" stroke-width="1.500"/></svg>`;
const chans = [['1','808 Kick',[0,1,2,15]],['2','808 Clap',[]],['3','808 HiHat',[0,2,5,9,14]],['4','808 Snare',[7,11,12]],['---','Sampler',[]]];
$('#channels').innerHTML = chans.map(([n, name, on], r) => `<div class="flex items-center h-[30px] pl-[7px]">
  <span class="size-[10px] rounded-full bg-[#a9ee44] border-2 border-[#3c5a20] outline outline-[#8a9296] mr-[5px] shrink-0"></span>${knob('M7.500 3v4')}${knob('M8 8h5')}
  <span class="ml-[5px] w-[33px] h-6 shrink-0 rounded border border-[#3d454b] bg-[#596168] flex items-center justify-end gap-[3px] pr-[3px] text-[#a5adb1] text-[14px] font-['Roboto',sans-serif]">${n}<svg class="w-[5px] h-3" viewBox="0 0 5 12"><path d="M1 1l3 2-3 2M4 7L1 9l3 2" fill="none" stroke="#3d454b"/></svg></span>
  <button class="ml-[8px] w-[83px] h-[26px] shrink-0 rounded-sm border border-[#363e44] ${r ? 'bg-linear-to-b from-[#5a636a] to-[#4b545a]' : 'bg-[#495157]'} text-[#dde2e5] text-[11px]">${name}</button>
  <span class="w-[26px] flex justify-center shrink-0"><span class="${r === 4 ? 'w-[8px] h-[26px] border-2 border-[#a5e83c] bg-[#4f5f50]' : 'w-[6px] h-[22px] border border-[#343c42] bg-[#596168] rounded-[1px]'}"></span></span>
  <span class="flex gap-1 pl-px">${Array.from({length: 16}, (_, i) => {
    const red = (i >> 2) % 2, lit = on.includes(i);
    const c = lit ? (red ? 'from-[#f8cfd2] to-[#cf8f94]' : 'from-[#e0eef5] to-[#8fa5b1]') : (red ? 'from-[#855f62] to-[#5c4548]' : 'from-[#646c71] to-[#444c51]');
    return `<button aria-label="Step ${i + 1}" aria-pressed="${lit}" class="w-3 h-5 rounded-[2px] border border-[#343b40] bg-linear-to-b ${c} flex justify-center"><span class="mt-[4px] w-[6px] h-px bg-[#20272c]"></span></button>`;
  }).join('')}</span></div>`).join('');

$('#midich').innerHTML = Array.from({length: 16}, (_, i) => `<button aria-pressed="true" class="bg-[#4f6049]">${i + 1}</button>`).join('');

// Playlist: one bar is four beats; bars and tracks fill whatever room the window gives
const BAR = 47.8, ROW = 56;
function drawPlaylist(width, height) {
  const bars = Math.ceil(width / BAR), rows = Math.ceil(height / ROW);
  $('#ruler').innerHTML = Array.from({length: bars}, (_, i) => {
    const w = Math.min(Math.round((i + 1) * BAR), Math.floor(width)) - Math.round(i * BAR);
    return `<span class="shrink-0 pl-px ${i % 4 ? 'text-[9px]' : 'text-[11px]'}" style="width:${w}px">${i + 1}</span>`;
  }).join('');
  $('#tracks').innerHTML = Array.from({length: rows}, (_, i) => `<div class="h-14 rounded-tr-md rounded-br-md border-t border-[#566067] bg-linear-to-b from-[#4d575d] to-[#454e55] px-[2px] flex flex-col justify-between text-[#7d868b] text-[12px] font-['Roboto',sans-serif]"><span class="leading-[17px]">Track ${i + 1}</span><span class="flex justify-between items-end pl-3 pr-[4px] pb-[5px]"><span class="w-[10px] h-[2px] bg-[repeating-linear-gradient(to_right,#353d43_0_2px,transparent_2px_4px)]"></span><span class="size-[9px] rounded-full bg-[#a9ee44] border-2 border-[#3c5a20] outline outline-[#8a9296]"></span></span></div>`).join('');
  let g = '';
  for (let b = 0; b < bars; b += 4) g += `<rect x="${Math.round(b * BAR)}" y="0" width="${Math.round(4 * BAR) + 1}" height="100%" fill="${b % 8 ? '#2d3d48' : '#33434d'}"/>`;
  for (let b = 0; b < bars * 4; b++) g += `<rect x="${Math.round(b * BAR / 4) - 1}" y="0" width="1" height="100%" fill="${b % 4 ? '#21313b' : '#0e1b22'}"/>`;
  for (let r = 1; r <= rows; r++) g += `<rect x="0" y="${r * ROW - 1}" width="100%" height="1" fill="#14222a"/><rect x="0" y="${r * ROW - 2}" width="100%" height="1" fill="#26353f"/>`;
  $('#grid').innerHTML = g;
}
drawPlaylist(1360, 882);
new ResizeObserver(([e]) => {
  const { width, height } = e.contentRect;
  if (width > 400 && height > 300) drawPlaylist(width, height);
}).observe($('#canvas'));
</script>
</body>
</html>
